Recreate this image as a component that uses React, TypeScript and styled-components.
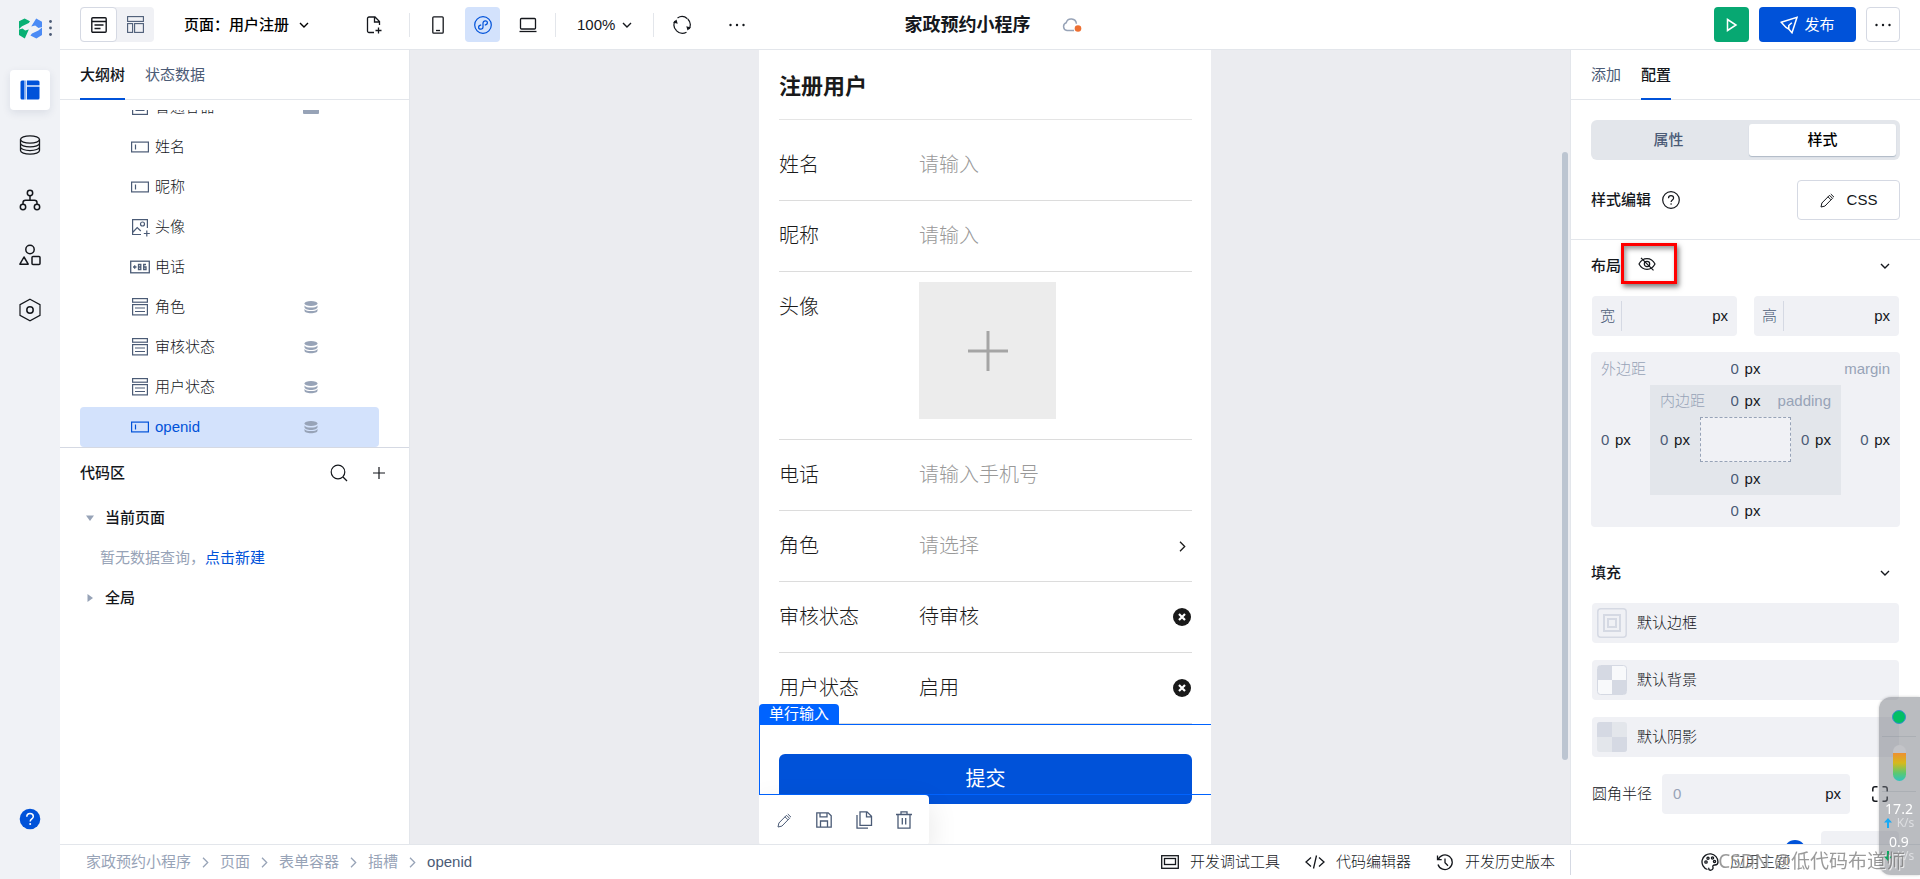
import React from "react";
import styled, { createGlobalStyle, css } from "styled-components";

const c = {
  blue: "#0052d9",
  select: "#0063ff",
  ink: "#14171c",
  slate: "#4b5b76",
  muted: "#97a3b7",
  line: "#e3e6eb",
  border: "#d5d9e3",
  fill: "#f0f1f5",
  canvas: "#ebecf0",
  tint: "#d3e2fc",
};

const Global = createGlobalStyle`
  *, *::before, *::after { box-sizing: border-box; }
  body {
    margin: 0;
    background: #fff;
    color: ${c.ink};
    font: 300 15px/20px "Liberation Sans", "Noto Sans CJK SC", sans-serif;
  }
  button, input, select {
    font: inherit;
    color: inherit;
    margin: 0;
    padding: 0;
    border: 0;
    background: none;
    outline: none;
  }
  button { cursor: pointer; }
  a { color: inherit; text-decoration: none; }
`;

/* ---------- icons ---------- */

const Svg = styled.svg<{ $color?: string }>`
  display: block;
  flex: none;
  fill: none;
  stroke: ${(p) => p.$color ?? "currentColor"};
`;

type IconProps = { w?: number; h?: number; color?: string; sw?: number; children: React.ReactNode };
const Icon = ({ w = 20, h = 20, color, sw = 1.3, children }: IconProps) => (
  <Svg width={w} height={h} viewBox={`0 0 ${w} ${h}`} $color={color} strokeWidth={sw} aria-hidden="true">
    {children}
  </Svg>
);

const Logo = () => (
  <Icon w={24} h={22}>
    <g stroke="none">
      <path fill="#07b073" d="M1 4.300 6.600 1.400 12 4.200 10.800 6 4 9.200 1 12z" />
      <path fill="#07b073" d="M1 12.500 4.500 11.600 7.200 13.400 10.800 12.400 6.800 21.400 1 18z" />
      <path fill="#4b8bf5" d="M13.200 9.400 18.200 1.400 24 4.800V10L20.500 11 17.200 8.600z" />
      <path fill="#4b8bf5" d="M12.400 18.600 14 16.600 20.400 13.500 24 10.600V18L18.400 21.400z" />
    </g>
  </Icon>
);
const DotsV = () => (
  <Icon w={3} h={16}>
    <g fill={c.slate} stroke="none">
      <circle cx="1.500" cy="1.500" r="1.400" />
      <circle cx="1.500" cy="8" r="1.400" />
      <circle cx="1.500" cy="14.500" r="1.400" />
    </g>
  </Icon>
);
const DotsH = () => (
  <Icon w={16} h={4}>
    <g fill={c.ink} stroke="none">
      <circle cx="1.500" cy="2" r="1.200" />
      <circle cx="8" cy="2" r="1.200" />
      <circle cx="14.500" cy="2" r="1.200" />
    </g>
  </Icon>
);
const LayoutFilled = () => (
  <Icon>
    <path d="M2 .5h2.500v19H2A1.500 1.500 0 0 1 .5 18V2A1.500 1.500 0 0 1 2 .5zM7 .5h11A1.500 1.500 0 0 1 19.500 2v3H7zM7 7h12.500v11a1.500 1.500 0 0 1-1.500 1.500H7z" fill={c.blue} stroke="none" />
    <path d="M5.700.5v19M7 6h12.500" stroke="#8fb3f0" />
  </Icon>
);
const Database = () => (
  <Icon w={22} h={20}>
    <ellipse cx="11" cy="4.500" rx="9.500" ry="3.700" />
    <path d="M1.500 4.500v11c0 2 4.200 3.700 9.500 3.700s9.500-1.700 9.500-3.700v-11M1.500 8.200c0 2 4.200 3.700 9.500 3.700s9.500-1.700 9.500-3.700M1.500 11.900c0 2 4.200 3.700 9.500 3.700s9.500-1.700 9.500-3.700" />
  </Icon>
);
const Flow = () => (
  <Icon w={22} h={22} sw={1.5}>
    <circle cx="11" cy="4" r="2.700" />
    <circle cx="4" cy="18" r="2.700" />
    <circle cx="18" cy="18" r="2.700" />
    <path d="M11 6.700v4.600M4 15.300v-1.500c0-1.500 1-2.500 2.500-2.500h9c1.500 0 2.500 1 2.500 2.500v1.500" />
  </Icon>
);
const Shapes = () => (
  <Icon w={22} h={22} sw={1.5}>
    <circle cx="11" cy="5.500" r="4.200" />
    <path d="M5 13 9.200 20.200H.9z" strokeLinejoin="round" />
    <rect x="13" y="12.500" width="8" height="8" rx="1" />
  </Icon>
);
const Hexagon = () => (
  <Icon w={22} h={24} sw={1.2}>
    <path d="M11 1.200 21 6.600v10.800L11 22.800 1 17.400V6.600z" />
    <circle cx="11" cy="12" r="3.200" strokeWidth="1.500" />
  </Icon>
);
const HelpFilled = () => (
  <Icon w={22} h={22}>
    <circle cx="11" cy="11" r="10.300" fill={c.blue} stroke="none" />
    <path d="M7.800 8.800c0-2 1.300-3.300 3.200-3.300s3.300 1.200 3.300 2.900c0 2.400-3.100 2.500-3.100 5" stroke="#fff" strokeWidth="1.500" />
    <circle cx="11.200" cy="16" r="1" fill="#fff" stroke="none" />
  </Icon>
);
const Help = () => (
  <Icon w={18} h={18} sw={1.2}>
    <circle cx="9" cy="9" r="8.300" />
    <path d="M6.500 7.300c0-1.600 1-2.600 2.500-2.600s2.600.9 2.600 2.300c0 1.900-2.500 2-2.500 3.900" />
    <circle cx="9.100" cy="13" r=".8" fill="currentColor" stroke="none" />
  </Icon>
);
const PageList = () => (
  <Icon w={16} h={16} sw={1.4}>
    <rect x=".8" y=".8" width="14.400" height="14.400" rx="1" />
    <path d="M1 4.500h14M3.500 8h9M3.500 11.500h6" />
  </Icon>
);
const PageGrid = () => (
  <Icon w={17} h={17} color={c.slate} sw={1.1}>
    <rect x=".6" y=".6" width="15.800" height="4.800" />
    <rect x=".6" y="7.600" width="5" height="8.800" />
    <rect x="7.600" y="7.600" width="8.800" height="8.800" />
  </Icon>
);
const FilePlus = () => (
  <Icon w={17} h={18}>
    <path d="M8 16.500H3A1.500 1.500 0 0 1 1.500 15V2.500A1.500 1.500 0 0 1 3 1h6l4.500 4.500V9M8.500 1v5h5M12.500 11.500v6M9.500 14.500h6" />
  </Icon>
);
const Phone = () => (
  <Icon w={12} h={18}>
    <rect x=".8" y=".8" width="10.400" height="16.400" rx="1" />
    <path d="M4 14.500h4" />
  </Icon>
);
const MiniProgram = () => (
  <Icon w={18} h={18} color={c.blue} sw={1.2}>
    <circle cx="9" cy="9" r="8.300" />
    <path d="M7.200 8.900C5.600 9.200 4.600 10 4.600 11.200c0 1.200.9 2 2.100 2 1.300 0 2.300-.9 2.300-2.200V7c0-1.300 1-2.200 2.300-2.200 1.200 0 2.100.8 2.100 2 0 1.200-1 2-2.600 2.300" />
  </Icon>
);
const Laptop = () => (
  <Icon w={18} h={16}>
    <rect x="1.500" y="1.500" width="15" height="10.500" rx="1" />
    <path d="M.5 14.500h17" />
  </Icon>
);
const Refresh = () => (
  <Icon w={20} h={20} sw={1.2}>
    <path d="M4.600 15.800A8.300 8.300 0 0 1 3 6M5.500 3A8.300 8.300 0 0 1 15.400 3.700M15.800 4A8.300 8.300 0 0 1 17 14M14.500 17.200A8.300 8.300 0 0 1 4.600 15.800" />
    <path d="M1 7.500 4.500 4.500l1.200 4.300zM19 12.500 15.500 15.500l-1.200-4.300z" fill="currentColor" stroke="none" />
  </Icon>
);
const ChevDown = () => (
  <Icon w={10} h={6} sw={1.4}>
    <path d="m1 1 4 4 4-4" />
  </Icon>
);
const ChevRight = ({ color = c.muted }: { color?: string }) => (
  <Icon w={9} h={11} color={color}>
    <path d="m2 .8 4.700 4.700L2 10.200" />
  </Icon>
);
const Cloud = () => (
  <Icon w={20} h={14} color={c.muted} sw={1.5}>
    <path d="M12 12.500H5A4 4 0 0 1 4.200 4.800a5.200 5.200 0 0 1 10.200 1" />
    <circle cx="16" cy="10.500" r="3.300" fill="#ed7033" stroke="none" />
  </Icon>
);
const Play = () => (
  <Icon w={12} h={14} color="#fff" sw={1.5}>
    <path d="M1.500 1.500 10 7l-8.500 5.500z" />
  </Icon>
);
const Send = () => (
  <Icon w={18} h={18} color="#fff" sw={1.5}>
    <path d="M1.200 6.300 17 1.300l-5 15.500-3.200-3.800-2.800-1.600zM8.800 13V9.500l3-2.800" />
  </Icon>
);
const InputIcon = () => (
  <Icon w={20} h={20} sw={1.2}>
    <rect x="1.600" y="5.100" width="16.800" height="9.800" />
    <path d="M5.500 7.500v5" />
  </Icon>
);
const ImageIcon = () => (
  <Icon w={20} h={20} sw={1.2}>
    <path d="M11 17.500H2.600V2.600h14.800V11M2.600 15.500l4.600-5 3.600 3.500" />
    <circle cx="12.500" cy="7" r="2" />
    <path d="M16.800 13.500v6M13.800 16.500h6" />
  </Icon>
);
const PhoneField = () => (
  <Icon w={20} h={20} sw={1.3}>
    <rect x=".7" y="4.200" width="18.600" height="11.600" />
    <path d="M3 10h3.500M4.700 8.300v3.500M8.500 7.500h2.300v5H8.500zM8.500 10h2.300M16 7.500h-2.300v5H16V10h-2.300" />
  </Icon>
);
const SelectIcon = () => (
  <Icon w={20} h={20} sw={1.2}>
    <rect x="2.600" y="1.600" width="14.800" height="3.600" />
    <rect x="2.600" y="7.600" width="14.800" height="10.300" />
    <path d="M5 11h10M5 14.500h10" />
  </Icon>
);
const ContainerIcon = () => (
  <Icon w={20} h={20} sw={1.2}>
    <rect x="2.600" y="2.600" width="14.800" height="14.800" />
    <path d="M5.500 13.500h9M5.500 10h9" />
  </Icon>
);
const Stack = () => (
  <Icon w={16} h={16}>
    <g fill={c.muted} stroke="none">
      <ellipse cx="8" cy="4.500" rx="6.500" ry="2.500" />
      <path d="M1.500 6.500c1 1.600 3.500 2.100 6.500 2.100s5.500-.5 6.500-2.100v1.400c0 1.800-3 3-6.500 3s-6.500-1.200-6.500-3zM1.500 10c1 1.600 3.500 2.100 6.500 2.100s5.500-.5 6.500-2.100v1.500c0 1.800-3 2.700-6.500 2.700s-6.500-.9-6.500-2.700z" />
    </g>
  </Icon>
);
const Slot = () => (
  <Icon w={16} h={16}>
    <rect x="0" y="0" width="16" height="15" rx="1" fill={c.muted} stroke="none" />
  </Icon>
);
const Caret = ({ open }: { open?: boolean }) => (
  <Icon w={8} h={8}>
    <path d={open ? "M0 1.500h8L4 7z" : "M1.500 0v8L7 4z"} fill={c.muted} stroke="none" />
  </Icon>
);
const Search = () => (
  <Icon w={18} h={18} sw={1.2}>
    <circle cx="8" cy="8" r="6.800" />
    <path d="m13 13 4 4" />
  </Icon>
);
const Plus = () => (
  <Icon w={12} h={12} sw={1.2}>
    <path d="M6 0v12M0 6h12" />
  </Icon>
);
const BigPlus = () => (
  <Icon w={40} h={40} color="#a5a5a5" sw={3}>
    <path d="M20 0v40M0 20h40" />
  </Icon>
);
const Clear = () => (
  <Icon w={18} h={18}>
    <circle cx="9" cy="9" r="9" fill="#1a1a1a" stroke="none" />
    <path d="m6 6 6 6M12 6l-6 6" stroke="#fff" strokeWidth="2.200" />
  </Icon>
);
const Pencil = () => (
  <Icon w={15} h={15} sw={1}>
    <path d="m1 14 .9-4 7.600-7.700 3 3-7.600 7.800zM8 3.800l3 3M10.800 1l3.200 3.200" />
  </Icon>
);
const Save = () => (
  <Icon w={16} h={16}>
    <path d="M.8.8h11.400l3 3v11.400H.8zM4 .8v4h7v-4M4.500 15V9h7v6" />
  </Icon>
);
const Copy = () => (
  <Icon w={17} h={18}>
    <path d="M4 .8h7l4.500 4.500v9H4zM10.500.8v5h5M1 4v13.200h11" />
  </Icon>
);
const Trash = () => (
  <Icon w={16} h={18}>
    <path d="M0 3.500h16M2 3.500v13.700h12V3.500M5 3.300V.8h6v2.500M6.300 7v6.500M9.700 7v6.500" />
  </Icon>
);
const EyeOff = () => (
  <Icon w={18} h={14} sw={1.2}>
    <path d="M1 7c2-3.700 4.800-5.300 8-5.300S15 3.300 17 7c-2 3.700-4.800 5.300-8 5.300S3 10.700 1 7z" />
    <circle cx="9" cy="7" r="2.700" />
    <path d="m3 .8 12.500 12.500" />
  </Icon>
);
const Corners = () => (
  <Icon w={16} h={16} sw={1.5}>
    <path d="M.8 5.500V3A2.200 2.200 0 0 1 3 .8h2.500M10.500.8H13A2.200 2.200 0 0 1 15.200 3v2.500M15.200 10.500V13a2.200 2.200 0 0 1-2.200 2.200h-2.500M5.500 15.200H3A2.200 2.200 0 0 1 .8 13v-2.500" />
  </Icon>
);
const DevTools = () => (
  <Icon w={18} h={14}>
    <rect x=".7" y=".7" width="16.600" height="12.600" />
    <rect x="3.500" y="3.500" width="11" height="6" />
  </Icon>
);
const Code = () => (
  <Icon w={20} h={14}>
    <path d="m6 2.500-5 4.500 5 4.500M14 2.500l5 4.500-5 4.500M11.500.5l-3 13" />
  </Icon>
);
const History = () => (
  <Icon w={18} h={17}>
    <path d="M2.200 5.500A7.300 7.300 0 1 1 2 10.500M1.500 1.500v4.200h4.200M9 4.500v4.300l3 3" />
  </Icon>
);
const Palette = () => (
  <Icon w={18} h={18}>
    <path d="M6.500 16.500A8 8 0 1 1 17 9c0 2.500-1.500 3-3.200 3-1.700 0-2.300 1-1.800 2.500.5 1.700-1.500 3-3 2.700-1.200-.2-1.500-1.500-1-2.500" />
    <circle cx="5" cy="9" r="1.200" />
    <circle cx="7" cy="5.300" r="1.100" />
    <circle cx="11.500" cy="5" r="1.100" />
    <circle cx="13.500" cy="8.500" r="1.100" />
  </Icon>
);

/* ---------- shell ---------- */

const Shell = styled.div`
  display: flex;
  height: 100vh;
  min-height: 700px;
  min-width: 1300px;
  overflow: hidden;
`;
const Rail = styled.nav`
  width: 60px;
  flex: none;
  display: flex;
  flex-direction: column;
  align-items: center;
  gap: 15px;
  padding-bottom: 48px;
  background: #f0f2f6;
`;
const Brand = styled.div`
  width: 100%;
  height: 55px;
  padding: 0 8px 0 18px;
  display: flex;
  align-items: center;
  justify-content: space-between;
`;
const RailButton = styled.button<{ $on?: boolean; $last?: boolean }>`
  width: 40px;
  height: ${(p) => (p.$last ? 24 : 40)}px;
  display: grid;
  place-items: center;
  border-radius: 4px;
  ${(p) => p.$last && "margin-top: auto;"}
  ${(p) =>
    p.$on &&
    css`
      background: #fff;
      box-shadow: 0 3px 8px rgba(30, 50, 90, 0.1);
    `}
`;
const Work = styled.div`
  flex: 1;
  min-width: 0;
  display: flex;
  flex-direction: column;
`;

/* ---------- top bar ---------- */

const TopBar = styled.header`
  height: 50px;
  flex: none;
  display: grid;
  grid-template-columns: 1fr auto 1fr;
  align-items: center;
  padding: 0 20px;
  border-bottom: 1px solid ${c.line};
`;
const Group = styled.div<{ $end?: boolean; $gap?: number }>`
  display: flex;
  align-items: center;
  justify-content: ${(p) => (p.$end ? "flex-end" : "flex-start")};
  gap: ${(p) => p.$gap ?? 0}px;
`;
const ViewSwitch = styled.div`
  display: flex;
  height: 35px;
  border-radius: 4px;
  background: ${c.fill};
`;
const ViewButton = styled.button<{ $on?: boolean }>`
  width: 37px;
  display: grid;
  place-items: center;
  border-radius: 4px;
  ${(p) => p.$on && `background: #fff; border: 1px solid ${c.border};`}
`;
const PagePicker = styled.button`
  display: flex;
  align-items: center;
  gap: 10px;
  margin: 0 48px 0 30px;
  font-weight: 500;
  color: #000;
`;
const ToolButton = styled.button<{ $on?: boolean }>`
  width: 35px;
  height: 35px;
  display: grid;
  place-items: center;
  border-radius: 4px;
  background: ${(p) => (p.$on ? c.tint : "none")};
`;
const Zoom = styled.button`
  display: flex;
  align-items: center;
  gap: 7px;
  margin: 0 11px;
`;
const Rule = styled.span<{ $wide?: boolean }>`
  width: 1px;
  height: 24px;
  margin: 0 10px 0 ${(p) => (p.$wide ? 17 : 10)}px;
  background: ${c.line};
`;
const AppName = styled.h1`
  display: flex;
  align-items: center;
  gap: 31px;
  margin: 0;
  padding-left: 6px;
  font-size: 18px;
  line-height: 24px;
  font-weight: 700;
`;
const ActionButton = styled.button<{ $kind: "run" | "publish" | "more" }>`
  height: 35px;
  min-width: ${(p) => ({ run: 35, publish: 97, more: 34 })[p.$kind]}px;
  display: flex;
  align-items: center;
  justify-content: center;
  gap: 6px;
  border-radius: 4px;
  color: #fff;
  font-weight: 400;
  background: ${(p) => ({ run: "#07a872", publish: c.blue, more: "#fff" })[p.$kind]};
  border: ${(p) => (p.$kind === "more" ? `1px solid ${c.border}` : "0")};
`;

/* ---------- panels ---------- */

const Body = styled.div`
  flex: 1;
  min-height: 0;
  display: flex;
`;
const SidePanel = styled.aside<{ $side: "left" | "right" }>`
  width: 350px;
  flex: none;
  display: flex;
  flex-direction: column;
  overflow: hidden;
  background: #fff;
  border-${(p) => (p.$side === "left" ? "right" : "left")}: 1px solid ${c.line};
`;
const Half = styled.section`
  flex: 1 1 0;
  min-height: 0;
  display: flex;
  flex-direction: column;
`;
const Tabs = styled.div`
  height: 50px;
  flex: none;
  display: flex;
  gap: 20px;
  padding: 0 20px;
  border-bottom: 1px solid ${c.line};
`;
const Tab = styled.button<{ $on?: boolean }>`
  height: 50px;
  color: ${(p) => (p.$on ? c.ink : c.slate)};
  font-weight: ${(p) => (p.$on ? 500 : 400)};
  ${(p) => p.$on && `box-shadow: inset 0 -2px ${c.blue};`}
`;
const Tree = styled.div`
  flex: 1;
  min-height: 0;
  margin: 10px 30px 0 20px;
  display: flex;
  flex-direction: column;
  justify-content: flex-end;
  overflow: hidden;
`;
const TreeRow = styled.button<{ $on?: boolean }>`
  height: 40px;
  flex: none;
  display: grid;
  grid-template-columns: 8px 20px 1fr 16px;
  align-items: center;
  column-gap: 5px;
  padding: 0 60px 0 37px;
  text-align: left;
  border-radius: 4px;
  color: ${(p) => (p.$on ? c.blue : c.ink)};
  background: ${(p) => (p.$on ? c.tint : "none")};
  svg { color: ${(p) => (p.$on ? c.blue : c.slate)}; }
`;
const CodeHead = styled.div`
  height: 51px;
  display: flex;
  align-items: center;
  padding: 0 24px 0 20px;
  border-top: 1px solid ${c.border};
  font-weight: 500;
`;
const Spacer = styled.span`
  flex: 1;
`;
const SmallButton = styled.button`
  width: 40px;
  height: 30px;
  display: grid;
  place-items: center;
  &:last-child { width: 12px; margin-left: 14px; }
`;
const CodeGroup = styled.button`
  width: 100%;
  height: 40px;
  display: flex;
  align-items: center;
  gap: 11px;
  padding-left: 26px;
  font-weight: 500;
`;
const CodeEmpty = styled.p`
  height: 40px;
  margin: 0;
  padding-left: 40px;
  line-height: 40px;
  color: ${c.muted};
  font-weight: 400;
  a { color: ${c.blue}; }
`;

/* ---------- canvas ---------- */

const Canvas = styled.main`
  flex: 1;
  min-width: 0;
  display: flex;
  background: ${c.canvas};
`;
const Stage = styled.div`
  flex: 1;
  min-width: 0;
  display: flex;
  justify-content: center;
  overflow: hidden;
`;
const ScrollTrack = styled.div`
  width: 10px;
  display: grid;
  grid-template-rows: 102fr 608fr 84fr;
  padding: 0 2px;
`;
const ScrollThumb = styled.span`
  grid-row: 2;
  border-radius: 3px;
  background: #bcc5d1;
`;
const Device = styled.div`
  width: 452px;
  padding: 0 19px 0 20px;
  overflow: hidden;
  background: #fff;
  color: #1a1a1a;
  font-size: 20px;
  line-height: 30px;
`;
const FormTitle = styled.h2`
  height: 70px;
  margin: 0 0 10px;
  padding-top: 22px;
  border-bottom: 1px solid #e5e5e5;
  font-size: 22px;
  line-height: 30px;
  font-weight: 700;
`;
const FormRow = styled.div<{ $tall?: boolean }>`
  display: flex;
  align-items: flex-start;
  padding: 10px 0 ${(p) => (p.$tall ? 20 : 10)}px;
  border-bottom: 1px solid #dcdcdc;
`;
const FormLabel = styled.label`
  width: 140px;
  flex: none;
  line-height: 50px;
`;
const fieldCss = css`
  flex: 1;
  min-width: 0;
  height: 50px;
`;
const TextField = styled.input`
  ${fieldCss}
  &::placeholder { color: #999; opacity: 1; }
`;
const PickField = styled.select<{ $empty?: boolean }>`
  ${fieldCss}
  appearance: none;
  color: ${(p) => (p.$empty ? "#999" : "inherit")};
`;
const FieldEnd = styled.button`
  width: 18px;
  height: 50px;
  margin-right: 1px;
  display: grid;
  place-items: center;
`;
const Upload = styled.button`
  width: 137px;
  height: 137px;
  display: grid;
  place-items: center;
  background: #ececec;
`;
const SubmitArea = styled.div`
  position: relative;
  padding-top: 30px;
`;
const Submit = styled.button`
  width: 100%;
  height: 50px;
  border-radius: 6px;
  color: #fff;
  background: ${c.blue};
  font-weight: 400;
`;
const Selection = styled.div`
  position: absolute;
  top: 0;
  left: -20px;
  right: -20px;
  height: 71px;
  border: 1px solid ${c.select};
  border-right: 0;
`;
const SelectionTag = styled.span`
  position: absolute;
  left: -1px;
  bottom: 100%;
  height: 21px;
  padding: 0 10px;
  border-radius: 4px 4px 0 0;
  color: #fff;
  background: ${c.select};
  font-size: 15px;
  line-height: 20px;
  font-weight: 400;
`;
const SelectionTools = styled.div`
  position: absolute;
  top: calc(100% + 1px);
  left: -1px;
  height: 50px;
  display: flex;
  padding: 0 5px;
  border-radius: 4px;
  color: ${c.slate};
  background: #fff;
  box-shadow: 0 10px 30px rgba(0, 0, 0, 0.1);
  button { width: 40px; display: grid; place-items: center; }
`;

/* ---------- style panel ---------- */

const Config = styled.div`
  flex: 1;
  min-height: 0;
  overflow: hidden;
`;
const Segments = styled.div`
  display: flex;
  gap: 7px;
  height: 40px;
  margin: 20px;
  padding: 4px;
  border-radius: 6px;
  background: #e3e6eb;
`;
const Segment = styled.button<{ $on?: boolean }>`
  flex: 1;
  padding-bottom: 1px;
  border-radius: 3px;
  color: ${(p) => (p.$on ? "#000" : c.slate)};
  font-weight: 500;
  ${(p) => p.$on && "background: #fff; box-shadow: 0 1px 1px #aeb9c6;"}
`;
const StyleHead = styled.div`
  display: flex;
  align-items: center;
  gap: 11px;
  padding: 0 20px 19px;
  border-bottom: 1px solid ${c.line};
  font-weight: 500;
`;
const CssButton = styled.button`
  width: 103px;
  height: 40px;
  display: flex;
  align-items: center;
  justify-content: center;
  gap: 12px;
  border: 1px solid ${c.border};
  border-radius: 4px;
  font-weight: 400;
`;
const Section = styled.section`
  padding: 0 20px;
  & + & { margin-top: 20px; }
`;
const SectionHead = styled.div`
  height: 52px;
  margin-bottom: 4px;
  display: flex;
  align-items: center;
  justify-content: space-between;
  padding-right: 10px;
  font-weight: 500;
`;
const Highlight = styled.button`
  position: absolute;
  left: 30px;
  top: -13px;
  width: 56px;
  height: 41px;
  display: grid;
  place-items: center;
  padding-right: 5px;
  border: 3px solid #f00;
  box-shadow: 2px 3px 5px rgba(0, 0, 0, 0.5), inset 2px 3px 5px rgba(0, 0, 0, 0.4);
`;
const HeadText = styled.span`
  position: relative;
`;
const SizePair = styled.div`
  display: flex;
  gap: 17px;
  padding: 0 1px;
`;
const SizeField = styled.label`
  flex: 1;
  height: 40px;
  min-width: 0;
  display: flex;
  align-items: center;
  padding: 5px 9px 5px 8px;
  border-radius: 4px;
  color: ${c.slate};
  background: ${c.fill};
  input {
    flex: 1;
    min-width: 0;
    height: 30px;
    margin-left: 6px;
    border-left: 1px solid ${c.border};
  }
`;
const Unit = styled.span`
  color: ${c.ink};
`;
const BoxModel = styled.div`
  display: grid;
  grid-template-columns: 59px 1fr 59px;
  grid-template-rows: 33px 110px 32px;
  place-items: center;
  margin-top: 16px;
  border-radius: 4px;
  background: ${c.fill};
`;
const PaddingBox = styled.div`
  width: 100%;
  height: 100%;
  display: grid;
  grid-template-columns: 50px 1fr 50px;
  grid-template-rows: 32px 45px 33px;
  place-items: center;
  background: #e3e6eb;
`;
const ContentBox = styled.span`
  width: 100%;
  height: 100%;
  border: 1px dashed ${c.muted};
  background: ${c.fill};
`;
const BoxTop = styled.div`
  grid-column: 1 / -1;
  width: 100%;
  display: grid;
  grid-template-columns: 1fr auto 1fr;
  align-items: center;
  padding: 0 10px;
  color: ${c.muted};
  > :last-child { text-align: right; }
`;
const BoxBottom = styled.div`
  grid-column: 1 / -1;
`;
const Edge = styled.label<{ $side?: "start" | "end" }>`
  display: flex;
  gap: 5px;
  padding: 0 ${(p) => (p.$side ? 10 : 0)}px;
  justify-self: ${(p) => p.$side ?? "center"};
  color: ${c.slate};
  input { width: 9px; height: 20px; }
`;
const FillList = styled.div`
  display: flex;
  flex-direction: column;
  gap: 17px;
  padding: 0 1px;
`;
const FillButton = styled.button`
  height: 40px;
  display: flex;
  align-items: center;
  gap: 10px;
  padding: 5px;
  border-radius: 4px;
  background: ${c.fill};
`;
const RadiusRow = styled.div`
  height: 40px;
  display: flex;
  align-items: center;
  gap: 10px;
  padding-right: 11px;
`;
const RadiusField = styled.div`
  flex: 1;
  min-width: 0;
  height: 40px;
  display: flex;
  align-items: center;
  margin-right: 12px;
  padding: 0 9px 0 11px;
  border-radius: 4px;
  background: ${c.fill};
  input { flex: 1; min-width: 0; }
  input::placeholder { color: ${c.muted}; opacity: 1; }
`;
const OpacityRow = styled.div`
  height: 40px;
  display: flex;
  align-items: center;
  gap: 15px;
`;
const OpacityRange = styled.input`
  appearance: none;
  flex: 1;
  height: 22px;
  &::-webkit-slider-thumb {
    appearance: none;
    width: 22px;
    height: 22px;
    border-radius: 50%;
    background: ${c.blue};
  }
`;
const OpacityValue = styled.input`
  width: 78px;
  height: 40px;
  border-radius: 4px;
  background: ${c.fill};
`;

/* ---------- footer ---------- */

const Footer = styled.footer`
  height: 35px;
  flex: none;
  display: flex;
  align-items: center;
  border-top: 1px solid ${c.line};
  background: #fff;
`;
const Crumbs = styled.nav`
  flex: 1;
  display: flex;
  align-items: center;
  gap: 10px;
  padding-left: 26px;
  color: ${c.muted};
  font-weight: 400;
`;
const CrumbNow = styled.span`
  color: ${c.slate};
`;
const FootTools = styled.div`
  display: flex;
  gap: 25px;
  padding-right: 15px;
`;
const FootButton = styled.button`
  display: flex;
  align-items: center;
  gap: 11px;
`;
const FootTheme = styled.div`
  width: 350px;
  height: 25px;
  display: flex;
  justify-content: center;
  border-left: 1px solid ${c.border};
`;

/* ---------- floating overlays ---------- */

const Monitor = styled.div`
  position: fixed;
  right: 0;
  bottom: 4px;
  width: 41px;
  height: 178px;
  display: flex;
  flex-direction: column;
  align-items: center;
  padding: 13px 1px 4px 0;
  border-radius: 12px 0 0 12px;
  background: rgba(118, 121, 130, 0.5);
  box-shadow: 0 0 3px rgba(0, 0, 0, 0.2);
  color: #fff;
  font-family: "Noto Sans", sans-serif;
  font-size: 14px;
  line-height: 16px;
  font-weight: 400;
`;
const MonitorDot = styled.span`
  width: 14px;
  height: 14px;
  border-radius: 50%;
  border: 1px solid #3a8fd0;
  background: #02bf65;
`;
const MonitorRule = styled.span<{ $gap: number }>`
  width: 34px;
  height: 1px;
  margin-top: ${(p) => p.$gap}px;
  background: rgba(110, 125, 130, 0.2);
`;
const Gauge = styled.span`
  width: 13px;
  height: 36px;
  margin-top: 8px;
  border-radius: 7px;
  background: linear-gradient(#c3c4c8 0 8px, #ee9030 8px, #d6b91c 18px, #5cc870 28px, #2fc3c0);
`;
const Speed = styled.span`
  margin-top: 9px;
  & + div + & { margin-top: 5px; }
`;
const SpeedUnit = styled.div`
  display: flex;
  align-items: center;
  gap: 5px;
  color: #dedfe2;
  font-size: 12px;
  line-height: 12px;
`;
const Watermark = styled.span`
  position: fixed;
  right: 15px;
  bottom: 4px;
  color: rgba(120, 120, 120, 0.75);
  text-shadow: 1px 1px 0 rgba(255, 255, 255, 0.7);
  font: 400 19px/28px "Noto Sans", "Noto Sans CJK SC", sans-serif;
  pointer-events: none;
`;

const SpeedArrow = ({ down }: { down?: boolean }) => (
  <Icon w={8} h={10}>
    <path
      d={down ? "M4 10 0 5.500h3V0h2v5.500h3z" : "M4 0 0 4.500h3V10h2V4.500h3z"}
      fill={down ? "#0aa860" : "#19aaf5"}
      stroke="none"
    />
  </Icon>
);

/* ---------- data ---------- */

const tree = [
  { name: "普通容器", icon: <ContainerIcon />, end: <Slot />, open: true },
  { name: "姓名", icon: <InputIcon /> },
  { name: "昵称", icon: <InputIcon /> },
  { name: "头像", icon: <ImageIcon /> },
  { name: "电话", icon: <PhoneField /> },
  { name: "角色", icon: <SelectIcon />, end: <Stack /> },
  { name: "审核状态", icon: <SelectIcon />, end: <Stack /> },
  { name: "用户状态", icon: <SelectIcon />, end: <Stack /> },
  { name: "openid", icon: <InputIcon />, end: <Stack />, on: true },
];

const fills = [
  {
    name: "默认边框",
    icon: (
      <Icon w={30} h={30} color={c.border}>
        <rect x=".8" y=".8" width="28.400" height="28.400" rx="3" strokeWidth="1.500" />
        <rect x="7" y="7" width="16" height="16" strokeWidth="2" />
        <rect x="11" y="11" width="8" height="8" strokeWidth="2" />
      </Icon>
    ),
  },
  {
    name: "默认背景",
    icon: (
      <Icon w={30} h={30} color={c.border}>
        <rect x=".5" y=".5" width="29" height="29" rx="3" fill="#f8f9fb" strokeWidth="1" />
        <path d="M1 1h14v14H1zM15 15h14v14H15z" fill={c.border} stroke="none" />
      </Icon>
    ),
  },
  {
    name: "默认阴影",
    icon: (
      <Icon w={30} h={30}>
        <rect width="30" height="30" rx="3" fill="#e3e6eb" stroke="none" />
        <path d="M3 0h12v15H0V3a3 3 0 0 1 3-3zM15 15h15v12a3 3 0 0 1-3 3H15z" fill={c.border} stroke="none" />
      </Icon>
    ),
  },
];

const EdgeValue = ({ name, side }: { name: string; side?: "start" | "end" }) => (
  <Edge $side={side}>
    <input aria-label={name} defaultValue="0" />
    <Unit>px</Unit>
  </Edge>
);

const crumbs = ["家政预约小程序", "页面", "表单容器", "插槽"];

export default function App() {
  return (
    <Shell>
      <Global />
      <Rail>
        <Brand>
          <Logo />
          <DotsV />
        </Brand>
        <RailButton $on aria-label="页面"><LayoutFilled /></RailButton>
        <RailButton aria-label="数据"><Database /></RailButton>
        <RailButton aria-label="流程"><Flow /></RailButton>
        <RailButton aria-label="组件"><Shapes /></RailButton>
        <RailButton aria-label="设置"><Hexagon /></RailButton>
        <RailButton $last aria-label="帮助"><HelpFilled /></RailButton>
      </Rail>

      <Work>
        <TopBar>
          <Group>
            <ViewSwitch>
              <ViewButton $on aria-label="列表"><PageList /></ViewButton>
              <ViewButton aria-label="布局"><PageGrid /></ViewButton>
            </ViewSwitch>
            <PagePicker>页面：用户注册 <ChevDown /></PagePicker>
            <ToolButton aria-label="新建页面"><FilePlus /></ToolButton>
            <Rule $wide />
            <Group $gap={10}>
              <ToolButton aria-label="手机"><Phone /></ToolButton>
              <ToolButton $on aria-label="小程序"><MiniProgram /></ToolButton>
              <ToolButton aria-label="电脑"><Laptop /></ToolButton>
            </Group>
            <Rule />
            <Zoom>100% <ChevDown /></Zoom>
            <Rule />
            <Group $gap={20}>
              <ToolButton aria-label="刷新"><Refresh /></ToolButton>
              <ToolButton aria-label="更多工具"><DotsH /></ToolButton>
            </Group>
          </Group>
          <AppName>家政预约小程序 <Cloud /></AppName>
          <Group $end $gap={10}>
            <ActionButton $kind="run" aria-label="预览"><Play /></ActionButton>
            <ActionButton $kind="publish"><Send />发布</ActionButton>
            <ActionButton $kind="more" aria-label="更多"><DotsH /></ActionButton>
          </Group>
        </TopBar>

        <Body>
          <SidePanel $side="left">
            <Half>
              <Tabs>
                <Tab $on>大纲树</Tab>
                <Tab>状态数据</Tab>
              </Tabs>
              <Tree>
                {tree.map((t) => (
                  <TreeRow key={t.name} $on={t.on}>
                    <span>{t.open && <Caret open />}</span>
                    {t.icon}
                    <span>{t.name}</span>
                    {t.end}
                  </TreeRow>
                ))}
              </Tree>
            </Half>
            <Half>
              <CodeHead>
                代码区
                <Spacer />
                <SmallButton aria-label="搜索"><Search /></SmallButton>
                <SmallButton aria-label="新建"><Plus /></SmallButton>
              </CodeHead>
              <CodeGroup><Caret open />当前页面</CodeGroup>
              <CodeEmpty>暂无数据查询，<a href="#new">点击新建</a></CodeEmpty>
              <CodeGroup><Caret />全局</CodeGroup>
            </Half>
          </SidePanel>

          <Canvas>
            <Stage>
              <Device>
                <FormTitle>注册用户</FormTitle>
                <FormRow>
                  <FormLabel htmlFor="f-name">姓名</FormLabel>
                  <TextField id="f-name" placeholder="请输入" />
                </FormRow>
                <FormRow>
                  <FormLabel htmlFor="f-nick">昵称</FormLabel>
                  <TextField id="f-nick" placeholder="请输入" />
                </FormRow>
                <FormRow $tall>
                  <FormLabel htmlFor="f-avatar">头像</FormLabel>
                  <Upload id="f-avatar"><BigPlus /></Upload>
                </FormRow>
                <FormRow>
                  <FormLabel htmlFor="f-tel">电话</FormLabel>
                  <TextField id="f-tel" placeholder="请输入手机号" />
                </FormRow>
                <FormRow>
                  <FormLabel htmlFor="f-role">角色</FormLabel>
                  <PickField id="f-role" $empty><option>请选择</option></PickField>
                  <FieldEnd aria-label="选择"><ChevRight color="#1a1a1a" /></FieldEnd>
                </FormRow>
                <FormRow>
                  <FormLabel htmlFor="f-audit">审核状态</FormLabel>
                  <PickField id="f-audit"><option>待审核</option></PickField>
                  <FieldEnd aria-label="清除"><Clear /></FieldEnd>
                </FormRow>
                <FormRow>
                  <FormLabel htmlFor="f-state">用户状态</FormLabel>
                  <PickField id="f-state"><option>启用</option></PickField>
                  <FieldEnd aria-label="清除"><Clear /></FieldEnd>
                </FormRow>
                <SubmitArea>
                  <Submit>提交</Submit>
                  <Selection>
                    <SelectionTag>单行输入</SelectionTag>
                    <SelectionTools>
                      <button aria-label="编辑"><Pencil /></button>
                      <button aria-label="保存"><Save /></button>
                      <button aria-label="复制"><Copy /></button>
                      <button aria-label="删除"><Trash /></button>
                    </SelectionTools>
                  </Selection>
                </SubmitArea>
              </Device>
            </Stage>
            <ScrollTrack><ScrollThumb /></ScrollTrack>
          </Canvas>

          <SidePanel $side="right">
            <Tabs>
              <Tab>添加</Tab>
              <Tab $on>配置</Tab>
            </Tabs>
            <Config>
              <Segments>
                <Segment>属性</Segment>
                <Segment $on>样式</Segment>
              </Segments>
              <StyleHead>
                样式编辑 <Help />
                <Spacer />
                <CssButton><Pencil />CSS</CssButton>
              </StyleHead>
              <Section>
                <SectionHead>
                  <HeadText>
                    布局
                    <Highlight aria-label="隐藏"><EyeOff /></Highlight>
                  </HeadText>
                  <ChevDown />
                </SectionHead>
                <SizePair>
                  <SizeField>宽<input /><Unit>px</Unit></SizeField>
                  <SizeField>高<input /><Unit>px</Unit></SizeField>
                </SizePair>
                <BoxModel>
                  <BoxTop>
                    <span>外边距</span>
                    <EdgeValue name="上外边距" />
                    <span>margin</span>
                  </BoxTop>
                  <EdgeValue name="左外边距" side="start" />
                  <PaddingBox>
                    <BoxTop>
                      <span>内边距</span>
                      <EdgeValue name="上内边距" />
                      <span>padding</span>
                    </BoxTop>
                    <EdgeValue name="左内边距" />
                    <ContentBox />
                    <EdgeValue name="右内边距" />
                    <BoxBottom><EdgeValue name="下内边距" /></BoxBottom>
                  </PaddingBox>
                  <EdgeValue name="右外边距" side="end" />
                  <BoxBottom><EdgeValue name="下外边距" /></BoxBottom>
                </BoxModel>
              </Section>
              <Section>
                <SectionHead>填充 <ChevDown /></SectionHead>
                <FillList>
                  {fills.map((f) => (
                    <FillButton key={f.name}>{f.icon}{f.name}</FillButton>
                  ))}
                  <RadiusRow>
                    <label htmlFor="radius">圆角半径</label>
                    <RadiusField>
                      <input id="radius" placeholder="0" />
                      <Unit>px</Unit>
                    </RadiusField>
                    <Corners />
                  </RadiusRow>
                  <OpacityRow>
                    <OpacityRange type="range" defaultValue="100" aria-label="透明度" />
                    <OpacityValue aria-label="透明度数值" />
                  </OpacityRow>
                </FillList>
              </Section>
            </Config>
          </SidePanel>
        </Body>

        <Footer>
          <Crumbs>
            {crumbs.map((t) => (
              <React.Fragment key={t}>
                <a href="#crumb">{t}</a>
                <ChevRight />
              </React.Fragment>
            ))}
            <CrumbNow>openid</CrumbNow>
          </Crumbs>
          <FootTools>
            <FootButton><DevTools />开发调试工具</FootButton>
            <FootButton><Code />代码编辑器</FootButton>
            <FootButton><History />开发历史版本</FootButton>
          </FootTools>
          <FootTheme>
            <FootButton><Palette />应用主题</FootButton>
          </FootTheme>
        </Footer>
      </Work>

      <Monitor>
        <MonitorDot />
        <MonitorRule $gap={12} />
        <Gauge />
        <MonitorRule $gap={10} />
        <Speed>17.2</Speed>
        <SpeedUnit><SpeedArrow />K/s</SpeedUnit>
        <Speed>0.9</Speed>
        <SpeedUnit><SpeedArrow down />K/s</SpeedUnit>
      </Monitor>
      <Watermark>CSDN @低代码布道师</Watermark>
    </Shell>
  );
}
